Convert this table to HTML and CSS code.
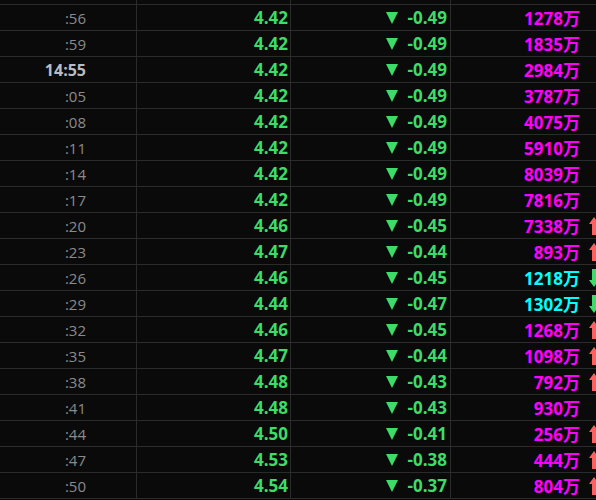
FILE: index.html
```html
<!DOCTYPE html>
<html>
<head>
<meta charset="utf-8">
<link rel="stylesheet" href="styles.css">
</head>
<body>
<div class="tbl">
  <div class="row ghost"><div class="c t"></div><div class="c p"></div><div class="c d"></div><div class="c v"></div><div class="c a"></div></div>
  <div class="row"><div class="c t">:56</div><div class="c p">4.42</div><div class="c d"><svg class="tri" width="12" height="12" viewBox="0 0 12 12"><polygon points="0,0 12,0 6,12"/></svg><span>-0.49</span></div><div class="c v m">1278万</div><div class="c a"></div></div>
  <div class="row"><div class="c t">:59</div><div class="c p">4.42</div><div class="c d"><svg class="tri" width="12" height="12" viewBox="0 0 12 12"><polygon points="0,0 12,0 6,12"/></svg><span>-0.49</span></div><div class="c v m">1835万</div><div class="c a"></div></div>
  <div class="row"><div class="c t hb">14:55</div><div class="c p">4.42</div><div class="c d"><svg class="tri" width="12" height="12" viewBox="0 0 12 12"><polygon points="0,0 12,0 6,12"/></svg><span>-0.49</span></div><div class="c v m">2984万</div><div class="c a"></div></div>
  <div class="row"><div class="c t">:05</div><div class="c p">4.42</div><div class="c d"><svg class="tri" width="12" height="12" viewBox="0 0 12 12"><polygon points="0,0 12,0 6,12"/></svg><span>-0.49</span></div><div class="c v m">3787万</div><div class="c a"></div></div>
  <div class="row"><div class="c t">:08</div><div class="c p">4.42</div><div class="c d"><svg class="tri" width="12" height="12" viewBox="0 0 12 12"><polygon points="0,0 12,0 6,12"/></svg><span>-0.49</span></div><div class="c v m">4075万</div><div class="c a"></div></div>
  <div class="row"><div class="c t">:11</div><div class="c p">4.42</div><div class="c d"><svg class="tri" width="12" height="12" viewBox="0 0 12 12"><polygon points="0,0 12,0 6,12"/></svg><span>-0.49</span></div><div class="c v m">5910万</div><div class="c a"></div></div>
  <div class="row"><div class="c t">:14</div><div class="c p">4.42</div><div class="c d"><svg class="tri" width="12" height="12" viewBox="0 0 12 12"><polygon points="0,0 12,0 6,12"/></svg><span>-0.49</span></div><div class="c v m">8039万</div><div class="c a"></div></div>
  <div class="row"><div class="c t">:17</div><div class="c p">4.42</div><div class="c d"><svg class="tri" width="12" height="12" viewBox="0 0 12 12"><polygon points="0,0 12,0 6,12"/></svg><span>-0.49</span></div><div class="c v m">7816万</div><div class="c a"></div></div>
  <div class="row"><div class="c t">:20</div><div class="c p">4.46</div><div class="c d"><svg class="tri" width="12" height="12" viewBox="0 0 12 12"><polygon points="0,0 12,0 6,12"/></svg><span>-0.45</span></div><div class="c v m">7338万</div><div class="c a"><svg class="arr up" width="10" height="18" viewBox="0 0 10 18"><polygon points="5,0 10,7 7,7 7,18 3,18 3,7 0,7"/></svg></div></div>
  <div class="row"><div class="c t">:23</div><div class="c p">4.47</div><div class="c d"><svg class="tri" width="12" height="12" viewBox="0 0 12 12"><polygon points="0,0 12,0 6,12"/></svg><span>-0.44</span></div><div class="c v m">893万</div><div class="c a"><svg class="arr up" width="10" height="18" viewBox="0 0 10 18"><polygon points="5,0 10,7 7,7 7,18 3,18 3,7 0,7"/></svg></div></div>
  <div class="row"><div class="c t">:26</div><div class="c p">4.46</div><div class="c d"><svg class="tri" width="12" height="12" viewBox="0 0 12 12"><polygon points="0,0 12,0 6,12"/></svg><span>-0.45</span></div><div class="c v cy">1218万</div><div class="c a"><svg class="arr dn" width="10" height="18" viewBox="0 0 10 18"><polygon points="3,0 7,0 7,11 10,11 5,18 0,11 3,11"/></svg></div></div>
  <div class="row"><div class="c t">:29</div><div class="c p">4.44</div><div class="c d"><svg class="tri" width="12" height="12" viewBox="0 0 12 12"><polygon points="0,0 12,0 6,12"/></svg><span>-0.47</span></div><div class="c v cy">1302万</div><div class="c a"><svg class="arr dn" width="10" height="18" viewBox="0 0 10 18"><polygon points="3,0 7,0 7,11 10,11 5,18 0,11 3,11"/></svg></div></div>
  <div class="row"><div class="c t">:32</div><div class="c p">4.46</div><div class="c d"><svg class="tri" width="12" height="12" viewBox="0 0 12 12"><polygon points="0,0 12,0 6,12"/></svg><span>-0.45</span></div><div class="c v m">1268万</div><div class="c a"><svg class="arr up" width="10" height="18" viewBox="0 0 10 18"><polygon points="5,0 10,7 7,7 7,18 3,18 3,7 0,7"/></svg></div></div>
  <div class="row"><div class="c t">:35</div><div class="c p">4.47</div><div class="c d"><svg class="tri" width="12" height="12" viewBox="0 0 12 12"><polygon points="0,0 12,0 6,12"/></svg><span>-0.44</span></div><div class="c v m">1098万</div><div class="c a"><svg class="arr up" width="10" height="18" viewBox="0 0 10 18"><polygon points="5,0 10,7 7,7 7,18 3,18 3,7 0,7"/></svg></div></div>
  <div class="row"><div class="c t">:38</div><div class="c p">4.48</div><div class="c d"><svg class="tri" width="12" height="12" viewBox="0 0 12 12"><polygon points="0,0 12,0 6,12"/></svg><span>-0.43</span></div><div class="c v m">792万</div><div class="c a"><svg class="arr up" width="10" height="18" viewBox="0 0 10 18"><polygon points="5,0 10,7 7,7 7,18 3,18 3,7 0,7"/></svg></div></div>
  <div class="row"><div class="c t">:41</div><div class="c p">4.48</div><div class="c d"><svg class="tri" width="12" height="12" viewBox="0 0 12 12"><polygon points="0,0 12,0 6,12"/></svg><span>-0.43</span></div><div class="c v m">930万</div><div class="c a"></div></div>
  <div class="row"><div class="c t">:44</div><div class="c p">4.50</div><div class="c d"><svg class="tri" width="12" height="12" viewBox="0 0 12 12"><polygon points="0,0 12,0 6,12"/></svg><span>-0.41</span></div><div class="c v m">256万</div><div class="c a"><svg class="arr up" width="10" height="18" viewBox="0 0 10 18"><polygon points="5,0 10,7 7,7 7,18 3,18 3,7 0,7"/></svg></div></div>
  <div class="row"><div class="c t">:47</div><div class="c p">4.53</div><div class="c d"><svg class="tri" width="12" height="12" viewBox="0 0 12 12"><polygon points="0,0 12,0 6,12"/></svg><span>-0.38</span></div><div class="c v m">444万</div><div class="c a"><svg class="arr up" width="10" height="18" viewBox="0 0 10 18"><polygon points="5,0 10,7 7,7 7,18 3,18 3,7 0,7"/></svg></div></div>
  <div class="row"><div class="c t">:50</div><div class="c p">4.54</div><div class="c d"><svg class="tri" width="12" height="12" viewBox="0 0 12 12"><polygon points="0,0 12,0 6,12"/></svg><span>-0.37</span></div><div class="c v m">804万</div><div class="c a"><svg class="arr up" width="10" height="18" viewBox="0 0 10 18"><polygon points="5,0 10,7 7,7 7,18 3,18 3,7 0,7"/></svg></div></div>
</div>
</body>
</html>
```
FILE: styles.css
```css
html, body {
  margin: 0;
  padding: 0;
  background: #0a0a0a;
  overflow: hidden;
  width: 596px;
  height: 500px;
}
.tbl {
  font-family: "Open Sans", "Noto Sans CJK SC", sans-serif;
  font-size: 17px;
  font-weight: bold;
}
.row {
  display: grid;
  grid-template-columns: 137px 154px 160px 137px 20px;
  height: 25px;
  border-bottom: 1px solid #2b2b2b;
}
.row.ghost {
  height: 4px;
}
.c {
  display: flex;
  align-items: center;
  white-space: nowrap;
  overflow: hidden;
}
.t {
  justify-content: flex-end;
  padding-right: 50px;
  border-right: 1px solid #2b2b2b;
  color: #8a8a8a;
  font-weight: normal;
  font-size: 15px;
}
.t.hb {
  color: #b9bcc2;
  font-weight: bold;
  font-size: 16px;
}
.p {
  justify-content: flex-end;
  padding-right: 2px;
  border-right: 1px solid #2b2b2b;
  color: #3ddc68;
}
.d {
  justify-content: flex-end;
  padding-right: 3px;
  border-right: 1px solid #2b2b2b;
  color: #3ddc68;
}
.d .tri {
  fill: #3ddc68;
  margin-right: 10px;
  margin-top: 1px;
}
.v {
  justify-content: flex-end;
  padding-right: 8px;
}
.v.m { color: #ff00ff; }
.v.cy { color: #00ffff; }
.a {
  align-items: center;
  padding-left: 1px;
}
.arr.up { fill: #ff5f5f; }
.arr.dn { fill: #3ddc68; }
```
